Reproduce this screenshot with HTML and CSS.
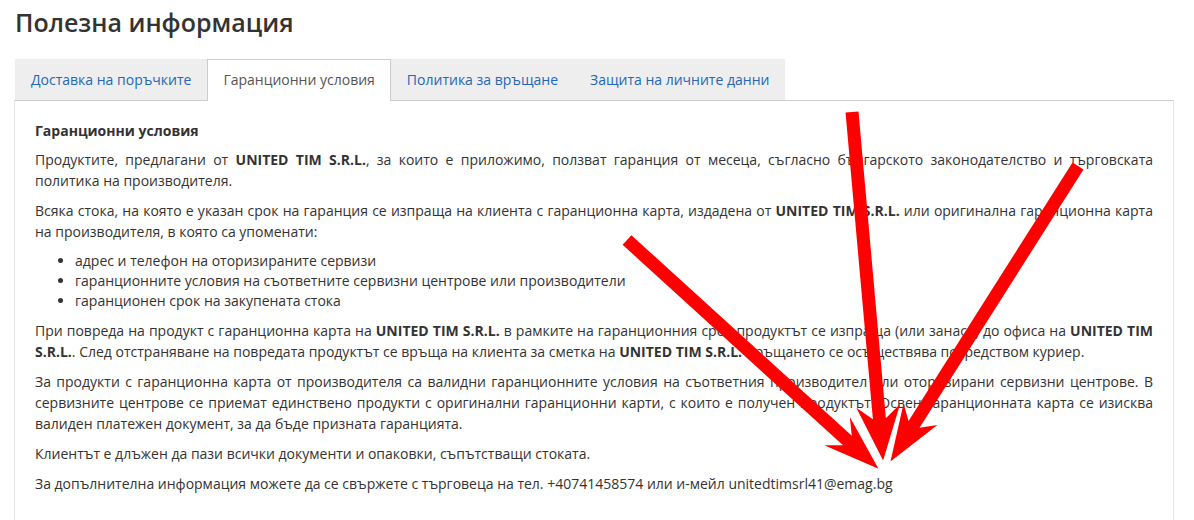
FILE: index.html
```html
<!DOCTYPE html>
<html lang="bg">
<head>
  <meta charset="UTF-8">
  <title>Полезна информация</title>
  <link rel="stylesheet" href="styles.css">
</head>
<body>
  <div class="page">
    <h1>Полезна информация</h1>

    <ul class="tabs">
      <li class="tab">Доставка на поръчките</li>
      <li class="tab active">Гаранционни условия</li>
      <li class="tab">Политика за връщане</li>
      <li class="tab">Защита на личните данни</li>
    </ul>

    <div class="panel">
      <h4>Гаранционни условия</h4>
      <p>Продуктите, предлагани от <b>UNITED TIM S.R.L.</b>, за които е приложимо, ползват гаранция от месеца, съгласно българското законодателство и търговската политика на производителя.</p>
      <p>Всяка стока, на която е указан срок на гаранция се изпраща на клиента с гаранционна карта, издадена от <b>UNITED TIM S.R.L.</b> или оригинална гаранционна карта на производителя, в която са упоменати:</p>
      <ul class="list">
        <li>адрес и телефон на оторизираните сервизи</li>
        <li>гаранционните условия на съответните сервизни центрове или производители</li>
        <li>гаранционен срок на закупената стока</li>
      </ul>
      <p>При повреда на продукт с гаранционна карта на <b>UNITED TIM S.R.L.</b> в рамките на гаранционния срок продуктът се изпраща (или занася) до офиса на <b>UNITED TIM S.R.L.</b>. След отстраняване на повредата продуктът се връща на клиента за сметка на <b>UNITED TIM S.R.L.</b> Връщането се осъществява посредством куриер.</p>
      <p>За продукти с гаранционна карта от производителя са валидни гаранционните условия на съответния производител или оторизирани сервизни центрове. В сервизните центрове се приемат единствено продукти с оригинални гаранционни карти, с които е получен продуктът. Освен гаранционната карта се изисква валиден платежен документ, за да бъде призната гаранцията.</p>
      <p>Клиентът е длъжен да пази всички документи и опаковки, съпътстващи стоката.</p>
      <p>За допълнителна информация можете да се свържете с търговеца на тел. +40741458574 или и-мейл unitedtimsrl41@emag.bg</p>
    </div>
  </div>

  <!-- red arrows drawn over the page -->
  <svg class="arrows" width="1194" height="520" viewBox="0 0 1194 520">
    <g fill="#ff0000">
      <g transform="translate(627 240) rotate(42.3)">
        <polygon points="0,-6.5 298,-6.5 284,-19 340,0 284,19 298,6.5 0,6.5"/>
      </g>
      <g transform="translate(852 112) rotate(84.9)">
        <polygon points="0,-6.5 308,-6.5 295,-22 350,0 295,22 308,6.5 0,6.5"/>
      </g>
      <g transform="translate(1078 166) rotate(122.4)">
        <polygon points="0,-6.5 306,-6.5 294,-20 350,0 294,20 306,6.5 0,6.5"/>
      </g>
    </g>
  </svg>
</body>
</html>
```

FILE: styles.css
```css
* {
  box-sizing: border-box;
}

body {
  margin: 0;
  font-family: "Open Sans", Arial, sans-serif;
  font-size: 14px;
  color: #333;
  background: #fff;
  overflow: hidden;
}

.page {
  padding: 0 20px 0 15px;
}

h1 {
  margin: 0;
  padding-top: 4px;
  font-size: 25px;
  font-weight: 600;
  line-height: 36px;
  color: #333;
}

.tabs {
  list-style: none;
  margin: 19px 0 0;
  padding: 0;
  display: flex;
  position: relative;
  z-index: 1;
}

.tab {
  background: #eee;
  color: #2566b8;
  padding: 10px 15px;
  line-height: 20px;
  border: 1px solid #eee;
  border-bottom: none;
}

.tab.active {
  background: #fff;
  color: #555;
  border-color: #ccc;
  margin-bottom: -1px;
}

.panel {
  border: 1px solid #e6e6e6;
  border-top-color: #ccc;
  margin-left: -1px;
  padding: 19px 20px 40px;
  height: 440px;
}

h4 {
  margin: 0 0 8px;
  font-size: 14px;
  font-weight: 700;
  line-height: 21px;
}

p {
  margin: 0 0 9px;
  line-height: 21px;
  text-align: justify;
}

b {
  font-weight: 700;
}

.list {
  margin: 0 0 9px;
  padding-left: 40px;
}

.list li {
  line-height: 20px;
}

.arrows {
  position: absolute;
  left: 0;
  top: 0;
  pointer-events: none;
}
```
